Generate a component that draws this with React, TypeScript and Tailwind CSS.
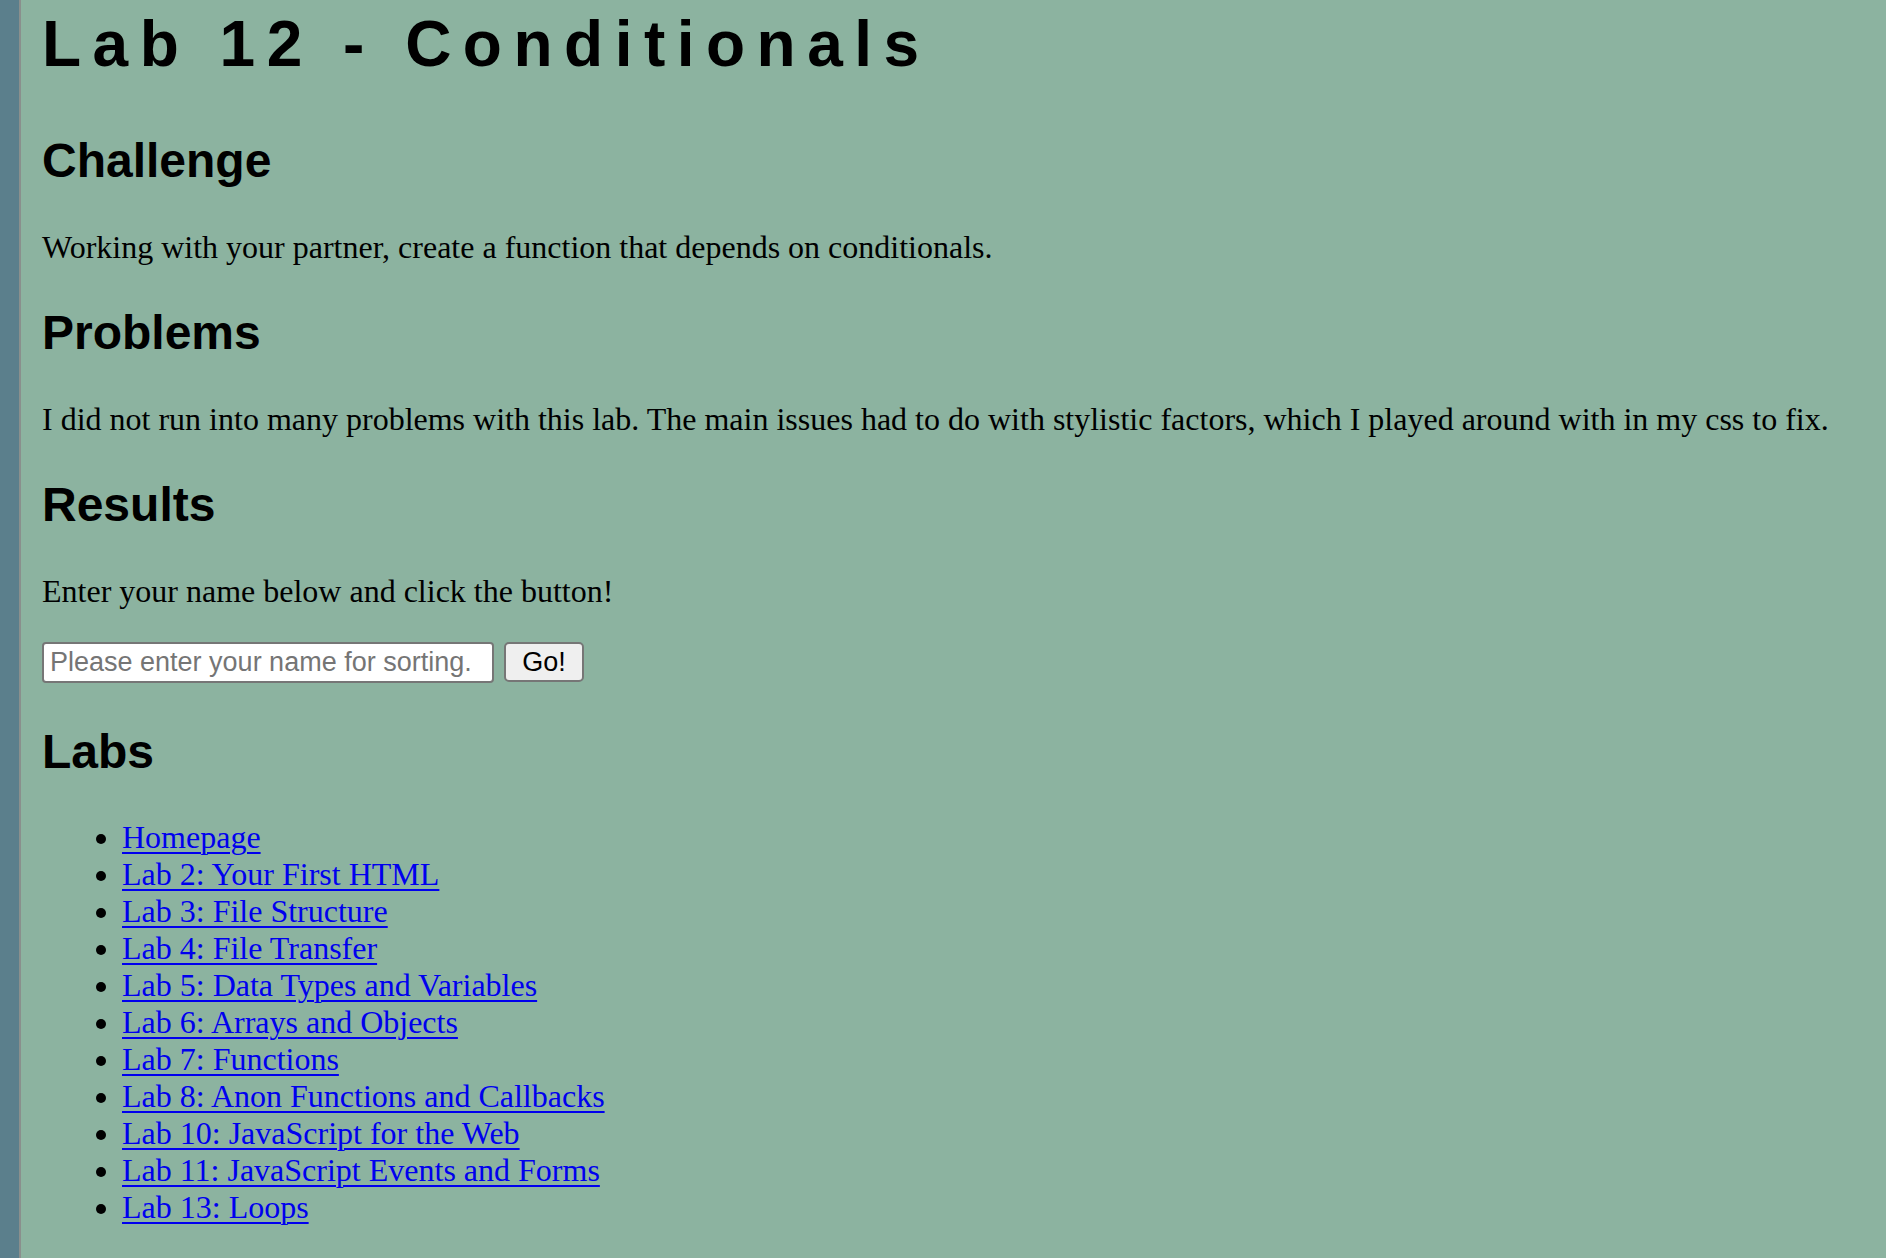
import React from 'react';

const labs = [
  'Homepage',
  'Lab 2: Your First HTML',
  'Lab 3: File Structure',
  'Lab 4: File Transfer',
  'Lab 5: Data Types and Variables',
  'Lab 6: Arrays and Objects',
  'Lab 7: Functions',
  'Lab 8: Anon Functions and Callbacks',
  'Lab 10: JavaScript for the Web',
  'Lab 11: JavaScript Events and Forms',
  'Lab 13: Loops',
];

const heading = "font-['Liberation_Sans',Arial,sans-serif] font-bold text-[48px] leading-[55px] text-black";
const para = "font-['Liberation_Serif','Times_New_Roman',serif] text-[32px] leading-[37px] text-black";

const App: React.FC = () => {
  return (
    <div className="min-h-screen flex bg-[#8cb3a0]">
      {/* left stripe */}
      <div className="w-[21px] shrink-0 bg-[#5b7f8c] border-r-2 border-[#8a8f8d]" />

      <main className="pl-[21px] pb-10">
        <h1 className="mt-[7px] font-['Liberation_Sans',Arial,sans-serif] font-bold text-[64px] leading-[74px] tracking-[11.5px] text-black">
          Lab 12 - Conditionals
        </h1>

        <h2 className={`mt-[52px] ${heading}`}>Challenge</h2>
        <p className={`mt-[41px] ${para}`}>
          Working with your partner, create a function that depends on conditionals.
        </p>

        <h2 className={`mt-[39px] ${heading}`}>Problems</h2>
        <p className={`mt-[41px] ${para}`}>
          I did not run into many problems with this lab. The main issues had to do with stylistic factors, which I played around with in my css to fix.
        </p>

        <h2 className={`mt-[39px] ${heading}`}>Results</h2>
        <p className={`mt-[41px] ${para}`}>Enter your name below and click the button!</p>

        {/* name form */}
        <form className="mt-[32px] flex items-start gap-[10px]" onSubmit={(e) => e.preventDefault()}>
          <input
            type="text"
            placeholder="Please enter your name for sorting."
            className="w-[452px] h-[41px] px-[6px] bg-white border-2 border-[#767676] rounded-[4px] font-['Liberation_Sans',Arial,sans-serif] text-[27px] text-black placeholder:text-[#757575] outline-none"
          />
          <button
            type="submit"
            className="w-[80px] h-[40px] bg-[#efefef] border-2 border-[#767676] rounded-[5px] font-['Liberation_Sans',Arial,sans-serif] text-[27px] leading-none text-black"
          >
            Go!
          </button>
        </form>

        <h2 className={`mt-[41px] ${heading}`}>Labs</h2>
        <ul className="mt-[40px] pl-[80px] list-disc font-['Liberation_Serif','Times_New_Roman',serif] text-[32px] leading-[37px] text-black">
          {labs.map((lab) => (
            <li key={lab}>
              <a href="#" className="text-[#0000ee] underline decoration-2 underline-offset-[4px]">
                {lab}
              </a>
            </li>
          ))}
        </ul>
      </main>
    </div>
  );
};

export default App;
